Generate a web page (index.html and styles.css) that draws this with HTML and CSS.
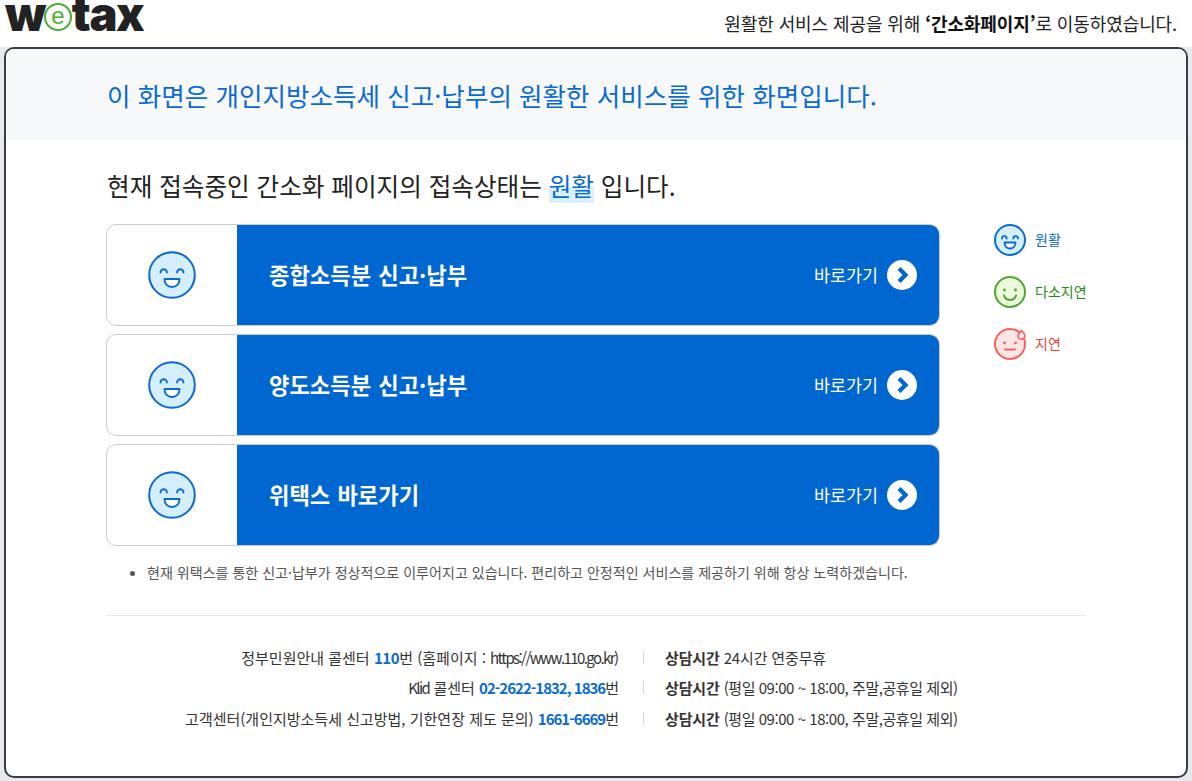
FILE: index.html
```html
<!DOCTYPE html>
<html lang="ko">
<head>
<meta charset="utf-8">
<title>wetax</title>
<link rel="stylesheet" href="styles.css">
</head>
<body>
<svg class="defs" width="0" height="0" aria-hidden="true">
  <symbol id="smile" viewBox="0 0 48 48">
    <circle cx="24" cy="24" r="22.8" fill="#d5efff" stroke="#0a6ad2" stroke-width="2"/>
    <path d="M12.5 21.5a3.2 3.2 0 0 1 6.4 0M29.1 21.5a3.2 3.2 0 0 1 6.4 0" fill="none" stroke="#0a6ad2" stroke-width="1.9" stroke-linecap="round"/>
    <path d="M16.5 28h15c0 5-3.2 8-7.500 8s-7.500-3-7.500-8z" fill="#fff" stroke="#0a6ad2" stroke-width="1.900" stroke-linejoin="round"/>
  </symbol>
  <symbol id="smile-sm" viewBox="0 0 32 32">
    <circle cx="16" cy="16" r="15" fill="#d5efff" stroke="#0a6ad2" stroke-width="2"/>
    <path d="M8 14.500a2.300 2.300 0 0 1 4.600 0M19.400 14.500a2.300 2.300 0 0 1 4.600 0" fill="none" stroke="#0a6ad2" stroke-width="1.800" stroke-linecap="round"/>
    <path d="M10.500 18.500h11c0 3.700-2.300 6-5.500 6s-5.500-2.300-5.500-6z" fill="#fff" stroke="#0a6ad2" stroke-width="1.800" stroke-linejoin="round"/>
  </symbol>
</svg>
<header class="top">
  <div class="logo">w<span class="logo-e">e</span>tax</div>
  <p class="top-msg">원활한 서비스 제공을 위해 <b>‘간소화페이지’</b>로 이동하였습니다.</p>
</header>
<main class="frame">
  <div class="banner">이 화면은 개인지방소득세 신고·납부의 원활한 서비스를 위한 화면입니다.</div>
  <section class="content">
    <h2 class="status">현재 접속중인 간소화 페이지의 접속상태는 <em>원활</em> 입니다.</h2>
    <div class="columns">
      <div class="cards">
        <a class="card"><span class="card-face"><svg class="face-lg"><use href="#smile"/></svg></span><span class="card-body"><strong>종합소득분 신고·납부</strong><span class="go">바로가기<svg class="arrow" viewBox="0 0 30 30"><circle cx="15" cy="15" r="15" fill="#fff"/><path d="M12 8.500l6.500 6.500-6.500 6.500" fill="none" stroke="#0066d0" stroke-width="4.200"/></svg></span></span></a>
        <a class="card"><span class="card-face"><svg class="face-lg"><use href="#smile"/></svg></span><span class="card-body"><strong>양도소득분 신고·납부</strong><span class="go">바로가기<svg class="arrow" viewBox="0 0 30 30"><circle cx="15" cy="15" r="15" fill="#fff"/><path d="M12 8.500l6.500 6.500-6.500 6.500" fill="none" stroke="#0066d0" stroke-width="4.200"/></svg></span></span></a>
        <a class="card"><span class="card-face"><svg class="face-lg"><use href="#smile"/></svg></span><span class="card-body"><strong>위택스 바로가기</strong><span class="go">바로가기<svg class="arrow" viewBox="0 0 30 30"><circle cx="15" cy="15" r="15" fill="#fff"/><path d="M12 8.500l6.500 6.500-6.500 6.500" fill="none" stroke="#0066d0" stroke-width="4.200"/></svg></span></span></a>
      </div>
      <ul class="legend">
        <li class="lg-blue"><svg class="face-sm"><use href="#smile-sm"/></svg>원활</li>
        <li class="lg-green"><svg class="face-sm" viewBox="0 0 32 32"><circle cx="16" cy="16" r="15" fill="#ecfbdc" stroke="#4ea42f" stroke-width="2"/><circle cx="10.500" cy="14" r="1.400" fill="#4ea42f"/><circle cx="21.500" cy="14" r="1.400" fill="#4ea42f"/><path d="M10 19.500c1 3 3.200 4.500 6 4.500s5-1.500 6-4.500" fill="none" stroke="#4ea42f" stroke-width="2" stroke-linecap="round"/></svg>다소지연</li>
        <li class="lg-red"><svg class="face-sm" viewBox="0 0 32 32"><circle cx="16" cy="16" r="15" fill="#ffe6e6" stroke="#f95f5f" stroke-width="2"/><circle cx="10.500" cy="15" r="1.400" fill="#f95f5f"/><circle cx="21.500" cy="15" r="1.400" fill="#f95f5f"/><path d="M11 21.500h10" fill="none" stroke="#f95f5f" stroke-width="2" stroke-linecap="round"/><path d="M27.500 2.500c2.300 2.500 3.500 3.800 3.500 5.300a3.500 3.500 0 0 1-7 0c0-1.500 1.200-2.800 3.500-5.300z" fill="#ffe6e6" stroke="#f95f5f" stroke-width="1.600"/></svg>지연</li>
      </ul>
    </div>
    <ul class="note"><li>현재 위택스를 통한 신고·납부가 정상적으로 이루어지고 있습니다. 편리하고 안정적인 서비스를 제공하기 위해 항상 노력하겠습니다.</li></ul>
    <div class="contacts">
      <p class="c-left">정부민원안내 콜센터 <b>110</b>번 (홈페이지 : <span class="latin">https://www.110.go.kr</span>)</p><p class="c-right"><b>상담시간</b> 24시간 연중무휴</p>
      <p class="c-left"><span class="latin">Klid</span> 콜센터 <b class="tight">02-2622-1832, 1836</b>번</p><p class="c-right"><b>상담시간</b> <span class="hours">(평일 09:00 ~ 18:00, 주말,공휴일 제외)</span></p>
      <p class="c-left">고객센터(개인지방소득세 신고방법, 기한연장 제도 문의) <b class="tight">1661-6669</b>번</p><p class="c-right"><b>상담시간</b> <span class="hours">(평일 09:00 ~ 18:00, 주말,공휴일 제외)</span></p>
    </div>
  </section>
</main>
</body>
</html>
```
FILE: styles.css
```css
* { box-sizing: border-box; }
html, body { margin: 0; height: 781px; overflow: hidden; }
body { background: #e8e9ec; font-family: "Noto Sans CJK KR", "Noto Sans", sans-serif; color: #222; }
.defs { position: absolute; }
.top { height: 47px; background: #fff; display: flex; justify-content: space-between; padding: 0 15px 0 5px; }
.logo { font-family: Inter, "Liberation Sans", sans-serif; font-weight: 900; font-size: 47px; line-height: 27px; height: 31px; color: #222; letter-spacing: -1.400px; display: flex; align-items: flex-start; }
.logo-e { width: 28px; height: 28px; margin: 3px 0 0 -1px; border: 2px solid #4fad35; border-radius: 50%; color: #4fad35; font-family: "Liberation Sans", sans-serif; font-weight: 400; font-size: 24px; line-height: 22px; text-align: center; letter-spacing: 0; }
.top-msg { margin: 0; padding-top: 11px; font-size: 18px; line-height: 24px; color: #222; letter-spacing: -0.100px; }
.top-msg b { color: #111; }
.frame { height: 731px; margin: 0 4px; background: #fff; border: 2px solid #3b3a4a; border-radius: 10px; overflow: hidden; }
.banner { height: 91px; background: #f7f8fa; padding-left: 101px; font-size: 25.500px; letter-spacing: 0.050px; line-height: 91px; color: #0a6ad2; }
.content { padding: 0 100px 0 100px; }
.status { margin: 0; padding: 28px 0 0 1px; height: 84px; font-size: 24.600px; line-height: 34px; font-weight: 400; color: #222; }
.status em { font-style: normal; color: #0a6ad2; background: linear-gradient(transparent 55%, #d9f0ff 55%); }
.columns { display: flex; justify-content: space-between; }
.cards { width: 834px; display: flex; flex-direction: column; gap: 8px; }
.card { height: 102px; display: flex; border: 1px solid #ccc; border-radius: 10px; overflow: hidden; background: #fff; }
.card-face { width: 130px; display: flex; align-items: center; justify-content: center; }
.face-lg { width: 48px; height: 48px; }
.card-body { flex: 1; background: #0066d0; color: #fff; display: flex; align-items: center; justify-content: space-between; padding: 0 22px 0 32px; }
.card-body strong { font-size: 22.200px; font-weight: 700; line-height: 30px; margin-top: -2px; word-spacing: 1px; }
.go { display: flex; align-items: center; gap: 9px; font-size: 17.400px; line-height: 30px; }
.arrow { width: 30px; height: 30px; }
.legend { list-style: none; margin: 0; padding: 0; width: 92px; display: flex; flex-direction: column; gap: 20px; }
.legend li { display: flex; align-items: center; gap: 9px; height: 32px; font-size: 14px; line-height: 30px; padding-bottom: 2px; white-space: nowrap; }
.face-sm { width: 32px; height: 32px; flex: none; position: relative; top: 1px; }
.lg-blue { color: #0a6ad2; }
.lg-green { color: #1f8a10; }
.lg-red { color: #f03c3c; }
.note { margin: 16px 0 0; padding: 0 0 33px 41px; border-bottom: 1px solid #e8e8e8; font-size: 14.050px; line-height: 20px; color: #555; }
.contacts { display: grid; grid-template-columns: 513px 1fr; row-gap: 9.300px; margin-top: 31px; font-size: 15px; line-height: 21px; color: #333; }
.contacts p { margin: 0; }
.c-left { text-align: right; }
.c-left b { letter-spacing: -0.400px; }
.c-left .tight { letter-spacing: -1px; }
.latin { letter-spacing: -1.600px; }
.hours { letter-spacing: -0.450px; }
.c-right { position: relative; padding-left: 46px; letter-spacing: -0.150px; }
.c-right::before { content: ""; position: absolute; left: 24px; top: 4px; height: 13px; width: 1px; background: #d5d5d5; }
.contacts .c-left b { color: #0a6ad2; }
```
